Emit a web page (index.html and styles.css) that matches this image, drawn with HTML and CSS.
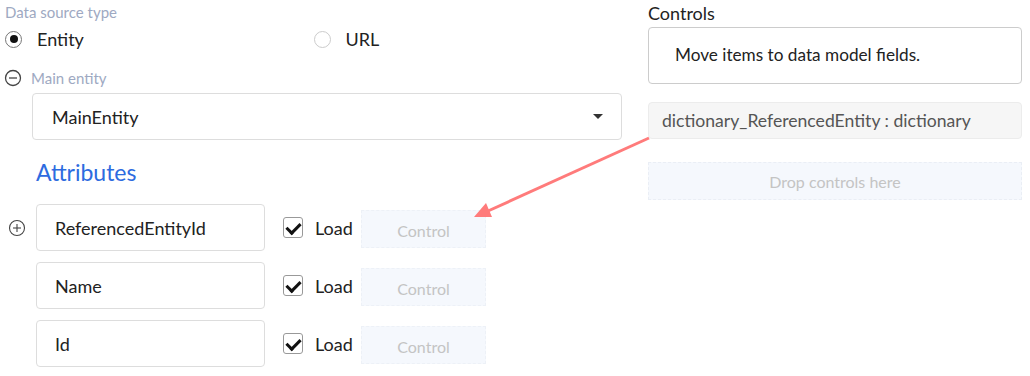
FILE: index.html
```html
<!DOCTYPE html>
<html lang="en">
<head>
  <meta charset="UTF-8" />
  <title>Data source</title>
  <link rel="stylesheet" href="styles.css">
</head>
<body>
  <div class="page">
    <!-- Data source settings -->
    <div class="source">
      <div class="hint">Data source type</div>
      <div class="radios">
        <label class="option"><span class="radio checked"></span>Entity</label>
        <label class="option"><span class="radio"></span>URL</label>
      </div>

      <div class="entity-head">
        <svg class="toggle" width="18" height="18" viewBox="0 0 18 18">
          <circle cx="9" cy="9" r="7.5" fill="none" stroke="#444" stroke-width="1.3"/>
          <line x1="5" y1="9" x2="13" y2="9" stroke="#444" stroke-width="1.3"/>
        </svg>
        <span class="hint">Main entity</span>
      </div>
      <div class="select">
        <span>MainEntity</span>
        <span class="caret"></span>
      </div>

      <h3 class="attr-title">Attributes</h3>

      <div class="attr-list">
        <div class="attr-row">
          <svg class="add" width="18" height="18" viewBox="0 0 18 18">
            <circle cx="9" cy="9" r="7.5" fill="none" stroke="#444" stroke-width="1.1"/>
            <line x1="5" y1="9" x2="13" y2="9" stroke="#444" stroke-width="1.1"/>
            <line x1="9" y1="5" x2="9" y2="13" stroke="#444" stroke-width="1.1"/>
          </svg>
          <div class="field">ReferencedEntityId</div>
          <label class="load"><span class="check"></span>Load</label>
          <div class="slot">Control</div>
        </div>
        <div class="attr-row">
          <span class="add"></span>
          <div class="field">Name</div>
          <label class="load"><span class="check"></span>Load</label>
          <div class="slot">Control</div>
        </div>
        <div class="attr-row">
          <span class="add"></span>
          <div class="field">Id</div>
          <label class="load"><span class="check"></span>Load</label>
          <div class="slot">Control</div>
        </div>
      </div>
    </div>

    <!-- Controls panel -->
    <div class="controls">
      <div class="panel-title">Controls</div>
      <div class="notice">Move items to data model fields.</div>
      <div class="item">dictionary_ReferencedEntity : dictionary</div>
      <div class="dropzone">Drop controls here</div>
    </div>
  </div>

  <svg class="arrow" width="1030" height="376" viewBox="0 0 1030 376">
    <line x1="649" y1="138" x2="488" y2="211" stroke="#ff7b7b" stroke-width="3"/>
    <polygon points="474,217 492,217 486,203" fill="#ff7b7b"/>
  </svg>
</body>
</html>
```

FILE: styles.css
```css
* {
  box-sizing: border-box;
}

body {
  margin: 0;
  font-family: Lato, 'Open Sans', sans-serif;
  color: #222;
  background: #fff;
  font-size: 18px;
}

.page {
  display: grid;
  grid-template-columns: 617px 374px;
  gap: 26px;
  padding: 0 8px 0 5px;
}

.hint {
  font-size: 15px;
  color: #9ea9c2;
  line-height: 20px;
}

.source > .hint {
  margin-top: 2px;
}

.radios {
  display: flex;
  margin-top: 5px;
  height: 24px;
  align-items: center;
}

.option {
  display: flex;
  align-items: center;
  width: 317px;
}

.radio {
  width: 17px;
  height: 17px;
  border-radius: 50%;
  border: 1px solid #ccc;
  margin-right: 15px;
  position: relative;
}

.radio.checked {
  border-color: #777;
}

.radio.checked::after {
  content: "";
  position: absolute;
  left: 3.5px;
  top: 3.5px;
  width: 8px;
  height: 8px;
  border-radius: 50%;
  background: #111;
}

.entity-head {
  display: flex;
  align-items: center;
  margin-top: 16px;
  height: 22px;
}

.toggle {
  margin-right: 9px;
  margin-left: -1px;
}

.select {
  margin: 4px 0 0 27px;
  height: 47px;
  border: 1px solid #ddd;
  border-radius: 4px;
  display: flex;
  align-items: center;
  justify-content: space-between;
  padding: 0 18px 0 19px;
}

.caret {
  width: 0;
  height: 0;
  border-left: 5px solid transparent;
  border-right: 5px solid transparent;
  border-top: 5px solid #333;
}

.attr-title {
  margin: 18px 0 0 31px;
  font-size: 23px;
  font-weight: 400;
  color: #2d6be0;
  line-height: 28px;
}

.attr-list {
  display: flex;
  flex-direction: column;
  gap: 11px;
  margin-top: 18px;
}

.attr-row {
  display: flex;
  align-items: center;
}

.add {
  width: 18px;
  margin: 0 10px 0 3px;
  flex: none;
}

.field {
  width: 229px;
  height: 47px;
  border: 1px solid #ddd;
  border-radius: 4px;
  padding-left: 18px;
  display: flex;
  align-items: center;
}

.load {
  display: flex;
  align-items: center;
  margin-left: 18px;
  width: 78px;
}

.check {
  width: 20px;
  height: 21px;
  border: 1px solid #999;
  border-radius: 3px;
  margin-right: 12px;
  position: relative;
}

.check::after {
  content: "";
  position: absolute;
  left: 5px;
  top: 2px;
  width: 6px;
  height: 11px;
  border-right: 3px solid #111;
  border-bottom: 3px solid #111;
  transform: rotate(45deg);
}

.slot {
  width: 125px;
  height: 38px;
  margin-top: 3px;
  background: #f5f8fd;
  border: 1px dashed #edf1f7;
  color: #c4c4c4;
  font-size: 16px;
  display: flex;
  align-items: center;
  justify-content: center;
  padding-top: 3px;
}

.panel-title {
  margin-top: 2px;
  line-height: 23px;
}

.notice {
  margin-top: 2px;
  height: 57px;
  border: 1px solid #ccc;
  border-radius: 4px;
  display: flex;
  align-items: center;
  padding: 0 0 2px 26px;
  font-size: 17.2px;
}

.item {
  margin-top: 18px;
  height: 37px;
  background: #f6f6f6;
  border: 1px solid #ececec;
  border-radius: 4px;
  color: #555;
  display: flex;
  align-items: center;
  padding-left: 13px;
  font-size: 17.6px;
}

.dropzone {
  margin-top: 23px;
  height: 38px;
  background: #f5f8fd;
  border: 1px dashed #eaeef5;
  color: #c4c4c4;
  font-size: 16px;
  display: flex;
  align-items: center;
  justify-content: center;
}

.arrow {
  position: absolute;
  left: 0;
  top: 0;
  pointer-events: none;
}
```
